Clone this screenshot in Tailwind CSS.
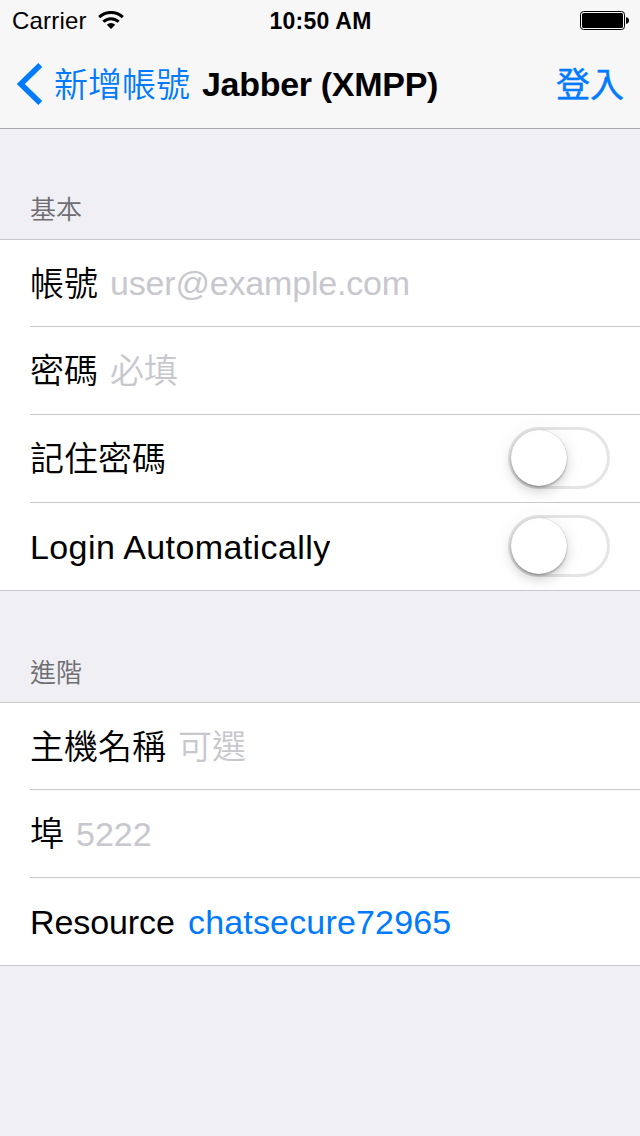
<!DOCTYPE html>
<html lang="zh-Hant"><head><meta charset="utf-8"><title>Jabber (XMPP)</title>
<script src="https://cdn.jsdelivr.net/npm/@tailwindcss/browser@4"></script></head>
<body class="w-[640px] h-[1136px] overflow-hidden bg-[#efeff4] text-black font-['Liberation_Sans','Noto_Sans_CJK_TC',sans-serif]">
<header class="h-[129px] bg-[#f7f7f7] border-b border-[#a7a7aa]">
  <div class="h-10 flex items-center justify-between pl-3 pr-[11px] text-2xl">
    <div class="w-[200px] flex items-center gap-3"><span class="w-[74px] pt-0.5 tracking-[0.2px]">Carrier</span>
      <svg width="26" height="18" viewBox="0 0 26 18"><path d="M1.2 6.2a17 17 0 0 1 23.6 0M5.4 10.8a10.7 10.7 0 0 1 15.2 0" fill="none" stroke="#000" stroke-width="3"/><path d="M13 18l-4.2-4.2a6 6 0 0 1 8.4 0z"/></svg></div>
    <span class="text-[23px] font-bold pt-0.5 tracking-[0.25px] whitespace-nowrap">10:50 AM</span>
    <div class="w-[200px] flex justify-end pt-px"><svg width="49" height="19" viewBox="0 0 49 19"><rect x=".5" y=".5" width="44" height="18" rx="3" fill="none" stroke="#000"/><rect x="2" y="2" width="41" height="15" rx="1.5"/><path d="M46 6.2c4 0 4 6.6 0 6.6z"/></svg></div>
  </div>
  <div class="h-[88px] flex items-center px-4 text-[34px] text-[#007aff]">
    <svg width="26" height="42" viewBox="0 0 26 42"><path d="M24.3 2L4.8 21l19.5 19" fill="none" stroke="#007aff" stroke-width="5.6"/></svg>
    <span class="ml-3 w-[148px] font-[350] pt-0.5">新增帳號</span>
    <h1 class="text-black font-bold whitespace-nowrap tracking-[-0.3px]">Jabber (XMPP)</h1>
    <span class="ml-auto font-normal pt-0.5 [-webkit-text-stroke:0.4px_#007aff]">登入</span>
  </div>
</header>
<main class="text-[34px]">
  <h2 class="h-[110px] flex items-end pl-[30px] pb-[10px] text-[26px] leading-[38px] font-[350] text-[#6d6d72]">基本</h2>
  <section class="bg-white border-y border-[#c8c7cc] pl-[30px] font-[350]">
    <div class="h-[87px] flex items-center gap-3 border-b border-[#c8c7cc]"><span class="pt-0.5">帳號</span><span class="text-[#c7c7cd] pt-px tracking-[-0.18px]">user@example.com</span></div>
    <div class="h-[88px] flex items-center gap-3 pt-0.5 border-b border-[#c8c7cc]"><span>密碼</span><span class="text-[#c7c7cd]">必填</span></div>
    <div class="h-[88px] flex items-center justify-between pr-[30px] border-b border-[#c8c7cc]"><span class="pt-0.5">記住密碼</span>
      <div class="w-[102px] h-[62px] mb-px rounded-full border-[3px] border-[#e5e5e5]"><div class="size-14 rounded-full bg-white shadow-[0_6px_12px_rgba(0,0,0,0.15),0_2px_2px_rgba(0,0,0,0.22),0_0_1px_rgba(0,0,0,0.3),0_0_24px_rgba(0,0,0,0.05)]"></div></div></div>
    <div class="h-[87px] flex items-center justify-between pr-[30px]"><span class="tracking-[0.4px] pt-0.5">Login Automatically</span>
      <div class="w-[102px] h-[62px] mb-px rounded-full border-[3px] border-[#e5e5e5]"><div class="size-14 rounded-full bg-white shadow-[0_6px_12px_rgba(0,0,0,0.15),0_2px_2px_rgba(0,0,0,0.22),0_0_1px_rgba(0,0,0,0.3),0_0_24px_rgba(0,0,0,0.05)]"></div></div></div>
  </section>
  <h2 class="h-[111px] flex items-end pl-[30px] pb-[10px] text-[26px] leading-[38px] font-[350] text-[#6d6d72]">進階</h2>
  <section class="bg-white border-y border-[#c8c7cc] pl-[30px] font-[350]">
    <div class="h-[87px] flex items-center gap-3 pt-0.5 border-b border-[#c8c7cc]"><span>主機名稱</span><span class="text-[#c7c7cd]">可選</span></div>
    <div class="h-[88px] flex items-center gap-3 pt-0.5 border-b border-[#c8c7cc]"><span>埠</span><span class="text-[#c7c7cd]">5222</span></div>
    <div class="h-[87px] flex items-center gap-[14px] pt-0.5"><span class="w-[144px] tracking-[-0.1px]">Resource</span><span class="text-[#007aff] tracking-[0.17px]">chatsecure72965</span></div>
  </section>
</main>
</body></html>
